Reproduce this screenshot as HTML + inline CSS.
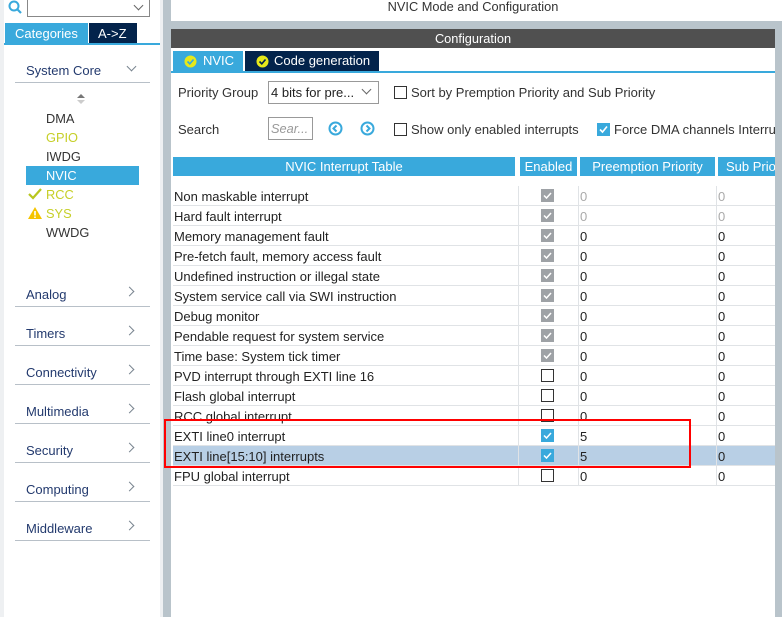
<!DOCTYPE html>
<html><head><meta charset="utf-8"><style>
*{margin:0;padding:0;box-sizing:border-box}
body{width:782px;height:617px;position:relative;overflow:hidden;background:#fff;font-family:"Liberation Sans",sans-serif;font-size:12.8px;color:#222}
.a{position:absolute;white-space:nowrap}
.cat{position:absolute;left:26px;color:#233a6e;font-size:13px}
.ul{position:absolute;left:15px;width:135px;height:1px;background:#b8c0c8}
.chev{position:absolute;left:126px;width:7px;height:7px;border-right:1px solid #7a8590;border-bottom:1px solid #7a8590;transform:rotate(-45deg)}
.row{position:absolute;left:173px;width:602px;height:20px;border-bottom:1px solid #e0e3e6;font-size:13px}
.row span{position:absolute;top:3px;left:1px}
.cb{position:absolute;left:368px;top:3px;width:13px;height:13px}
.g{background:#9ea2a6}
.b{background:#39a9dc}
.e{border:1px solid #333;background:#fff}
.cb svg{position:absolute;left:1px;top:1px}
</style></head><body>
<div class="a" style="left:0;top:0;width:4px;height:617px;background:#eef0f2"></div>
<svg class="a" style="left:8px;top:0" width="16" height="16"><circle cx="6" cy="6" r="4.5" fill="none" stroke="#39a9dc" stroke-width="2"/><line x1="9" y1="9" x2="13" y2="13" stroke="#39a9dc" stroke-width="2.2"/></svg>
<div class="a" style="left:27px;top:-1px;width:123px;height:18px;border:1px solid #888"></div>
<div class="a" style="left:135px;top:2px;width:7px;height:7px;border-right:1px solid #666;border-bottom:1px solid #666;transform:rotate(45deg)"></div>
<div class="a" style="left:5px;top:23px;width:83px;height:21px;background:#39a9dc;color:#fff;font-size:13px;padding:3px 0 0 10px">Categories</div>
<div class="a" style="left:89px;top:23px;width:48px;height:21px;background:#03234b;color:#fff;font-size:13px;padding:3px 0 0 9px">A-&gt;Z</div>
<div class="a" style="left:4px;top:43px;width:159px;height:2px;background:#39a9dc"></div>
<div class="cat" style="top:63px">System Core</div>
<div class="a" style="left:128px;top:63px;width:7px;height:7px;border-right:1px solid #7a8590;border-bottom:1px solid #7a8590;transform:rotate(45deg)"></div>
<div class="ul" style="top:82px"></div>
<div class="a" style="left:77px;top:94px;width:0;height:0;border:4px solid transparent;border-bottom:4px solid #777;border-top:0"></div>
<div class="a" style="left:77px;top:100px;width:0;height:0;border:4px solid transparent;border-top:4px solid #ccc;border-bottom:0"></div>
<div class="a" style="left:46px;top:111px;color:#333">DMA</div>
<div class="a" style="left:46px;top:130px;color:#c6cf28">GPIO</div>
<div class="a" style="left:46px;top:149px;color:#333">IWDG</div>
<div class="a" style="left:26px;top:166px;width:113px;height:19px;background:#39a9dc"></div>
<div class="a" style="left:46px;top:168px;color:#fff">NVIC</div>
<svg class="a" style="left:28px;top:188px" width="14" height="12"><path d="M1 6 L5 10 L13 1" fill="none" stroke="#b8c61e" stroke-width="2.2"/></svg>
<div class="a" style="left:46px;top:187px;color:#c6cf28">RCC</div>
<svg class="a" style="left:27px;top:206px" width="16" height="14"><path d="M8 1 L15 13 L1 13 Z" fill="#f5c400"/><rect x="7.2" y="5" width="1.6" height="4.5" fill="#fff"/><rect x="7.2" y="10.5" width="1.6" height="1.5" fill="#fff"/></svg>
<div class="a" style="left:46px;top:206px;color:#c6cf28">SYS</div>
<div class="a" style="left:46px;top:225px;color:#333">WWDG</div>
<div class="cat" style="top:287px">Analog</div><div class="chev" style="top:288px"></div><div class="ul" style="top:306px"></div>
<div class="cat" style="top:326px">Timers</div><div class="chev" style="top:327px"></div><div class="ul" style="top:345px"></div>
<div class="cat" style="top:365px">Connectivity</div><div class="chev" style="top:366px"></div><div class="ul" style="top:384px"></div>
<div class="cat" style="top:404px">Multimedia</div><div class="chev" style="top:405px"></div><div class="ul" style="top:423px"></div>
<div class="cat" style="top:443px">Security</div><div class="chev" style="top:444px"></div><div class="ul" style="top:462px"></div>
<div class="cat" style="top:482px">Computing</div><div class="chev" style="top:483px"></div><div class="ul" style="top:501px"></div>
<div class="cat" style="top:521px">Middleware</div><div class="chev" style="top:522px"></div><div class="ul" style="top:540px"></div>
<div class="a" style="left:160px;top:0;width:3px;height:617px;background:#eef0f2"></div>
<div class="a" style="left:163px;top:0;width:8px;height:617px;background:#b9c4cb"></div>
<div class="a" style="left:775px;top:21px;width:7px;height:596px;background:#b9c4cb"></div>
<div class="a" style="left:171px;width:604px;text-align:center;top:-1px;color:#333">NVIC Mode and Configuration</div>
<div class="a" style="left:171px;top:21px;width:611px;height:8px;background:#b9c4cb"></div>
<div class="a" style="left:171px;top:29px;width:604px;height:19px;background:#505050;color:#fff;text-align:center;padding-top:2px">Configuration</div>
<div class="a" style="left:173px;top:51px;width:70px;height:21px;background:#39a9dc;color:#fff;padding:2px 0 0 30px;font-size:13px">NVIC</div>
<div class="a" style="left:245px;top:51px;width:134px;height:21px;background:#03234b;color:#fff;padding:2px 0 0 29px;font-size:13px">Code generation</div>
<svg class="a" style="left:184px;top:55px" width="13" height="13"><circle cx="6.5" cy="6.5" r="6" fill="#e6e81a"/><path d="M3.5 6.5 L5.8 8.8 L9.5 4.5" fill="none" stroke="#39a9dc" stroke-width="1.6"/></svg>
<svg class="a" style="left:256px;top:55px" width="13" height="13"><circle cx="6.5" cy="6.5" r="6" fill="#e6e81a"/><path d="M3.5 6.5 L5.8 8.8 L9.5 4.5" fill="none" stroke="#03234b" stroke-width="1.6"/></svg>
<div class="a" style="left:171px;top:71px;width:604px;height:2px;background:#39a9dc"></div>
<div class="a" style="left:178px;top:85px;color:#333;font-size:13px">Priority Group</div>
<div class="a" style="left:268px;top:81px;width:111px;height:23px;border:1px solid #999;padding:3px 0 0 2px;font-size:13px">4 bits for pre...</div>
<div class="a" style="left:363px;top:86px;width:7px;height:7px;border-right:1px solid #666;border-bottom:1px solid #666;transform:rotate(45deg);background:#fff"></div>
<div class="a" style="left:394px;top:86px;width:13px;height:13px;border:1px solid #333"></div>
<div class="a" style="left:411px;top:85px;color:#333;font-size:13px">Sort by Premption Priority and Sub Priority</div>
<div class="a" style="left:178px;top:122px;color:#333;font-size:13px">Search</div>
<div class="a" style="left:268px;top:117px;width:45px;height:23px;border:1px solid #999;padding:3px 0 0 2px;color:#999;font-style:italic">Sear...</div>
<svg class="a" style="left:328px;top:121px" width="15" height="15"><circle cx="7.5" cy="7.5" r="6" fill="none" stroke="#39a9dc" stroke-width="2"/><path d="M8.5 4.5 L5.5 7.5 L8.5 10.5" fill="none" stroke="#39a9dc" stroke-width="2"/></svg>
<svg class="a" style="left:360px;top:121px" width="15" height="15"><circle cx="7.5" cy="7.5" r="6" fill="none" stroke="#39a9dc" stroke-width="2"/><path d="M6.5 4.5 L9.5 7.5 L6.5 10.5" fill="none" stroke="#39a9dc" stroke-width="2"/></svg>
<div class="a" style="left:394px;top:123px;width:13px;height:13px;border:1px solid #333"></div>
<div class="a" style="left:411px;top:122px;color:#333;font-size:13px">Show only enabled interrupts</div>
<div class="a" style="left:597px;top:123px;width:13px;height:13px;background:#39a9dc"><svg width="13" height="13"><path d="M3 6.5 L5.5 9 L10 3.5" fill="none" stroke="#fff" stroke-width="1.6"/></svg></div>
<div class="a" style="left:614px;top:122px;color:#333;width:161px;overflow:hidden;font-size:13px">Force DMA channels Interrupts</div>
<div class="a" style="left:173px;top:157px;width:342px;height:19px;background:#39a9dc;color:#fff;text-align:center;padding-top:2px;font-size:13px">NVIC Interrupt Table</div>
<div class="a" style="left:520px;top:157px;width:57px;height:19px;background:#39a9dc;color:#fff;text-align:center;padding-top:2px;font-size:13px">Enabled</div>
<div class="a" style="left:580px;top:157px;width:135px;height:19px;background:#39a9dc;color:#fff;text-align:center;padding-top:2px;font-size:13px">Preemption Priority</div>
<div class="a" style="left:718px;top:157px;width:57px;height:19px;background:#39a9dc;color:#fff;padding:2px 0 0 8px;overflow:hidden;font-size:13px">Sub Priority</div>
<div class="row" style="top:446px;background:#b8cfe5"></div>
<div class="a" style="left:518px;top:186px;width:1px;height:300px;background:#e0e3e6"></div>
<div class="a" style="left:578px;top:186px;width:1px;height:300px;background:#e0e3e6"></div>
<div class="a" style="left:716px;top:186px;width:1px;height:300px;background:#e0e3e6"></div>
<div class="row" style="top:186px"><span>Non maskable interrupt</span><div class="cb g"><svg width="11" height="11"><path d="M2 5.5 L4.5 8 L9 3" fill="none" stroke="#fff" stroke-width="1.5"/></svg></div><span style="left:407px;color:#aaa">0</span><span style="left:545px;color:#aaa">0</span></div>
<div class="row" style="top:206px"><span>Hard fault interrupt</span><div class="cb g"><svg width="11" height="11"><path d="M2 5.5 L4.5 8 L9 3" fill="none" stroke="#fff" stroke-width="1.5"/></svg></div><span style="left:407px;color:#aaa">0</span><span style="left:545px;color:#aaa">0</span></div>
<div class="row" style="top:226px"><span>Memory management fault</span><div class="cb g"><svg width="11" height="11"><path d="M2 5.5 L4.5 8 L9 3" fill="none" stroke="#fff" stroke-width="1.5"/></svg></div><span style="left:407px">0</span><span style="left:545px">0</span></div>
<div class="row" style="top:246px"><span>Pre-fetch fault, memory access fault</span><div class="cb g"><svg width="11" height="11"><path d="M2 5.5 L4.5 8 L9 3" fill="none" stroke="#fff" stroke-width="1.5"/></svg></div><span style="left:407px">0</span><span style="left:545px">0</span></div>
<div class="row" style="top:266px"><span>Undefined instruction or illegal state</span><div class="cb g"><svg width="11" height="11"><path d="M2 5.5 L4.5 8 L9 3" fill="none" stroke="#fff" stroke-width="1.5"/></svg></div><span style="left:407px">0</span><span style="left:545px">0</span></div>
<div class="row" style="top:286px"><span>System service call via SWI instruction</span><div class="cb g"><svg width="11" height="11"><path d="M2 5.5 L4.5 8 L9 3" fill="none" stroke="#fff" stroke-width="1.5"/></svg></div><span style="left:407px">0</span><span style="left:545px">0</span></div>
<div class="row" style="top:306px"><span>Debug monitor</span><div class="cb g"><svg width="11" height="11"><path d="M2 5.5 L4.5 8 L9 3" fill="none" stroke="#fff" stroke-width="1.5"/></svg></div><span style="left:407px">0</span><span style="left:545px">0</span></div>
<div class="row" style="top:326px"><span>Pendable request for system service</span><div class="cb g"><svg width="11" height="11"><path d="M2 5.5 L4.5 8 L9 3" fill="none" stroke="#fff" stroke-width="1.5"/></svg></div><span style="left:407px">0</span><span style="left:545px">0</span></div>
<div class="row" style="top:346px"><span>Time base: System tick timer</span><div class="cb g"><svg width="11" height="11"><path d="M2 5.5 L4.5 8 L9 3" fill="none" stroke="#fff" stroke-width="1.5"/></svg></div><span style="left:407px">0</span><span style="left:545px">0</span></div>
<div class="row" style="top:366px"><span>PVD interrupt through EXTI line 16</span><div class="cb e"></div><span style="left:407px">0</span><span style="left:545px">0</span></div>
<div class="row" style="top:386px"><span>Flash global interrupt</span><div class="cb e"></div><span style="left:407px">0</span><span style="left:545px">0</span></div>
<div class="row" style="top:406px"><span>RCC global interrupt</span><div class="cb e"></div><span style="left:407px">0</span><span style="left:545px">0</span></div>
<div class="row" style="top:426px"><span>EXTI line0 interrupt</span><div class="cb b"><svg width="11" height="11"><path d="M2 5.5 L4.5 8 L9 3" fill="none" stroke="#fff" stroke-width="1.5"/></svg></div><span style="left:407px">5</span><span style="left:545px">0</span></div>
<div class="row" style="top:446px;background:transparent"><span>EXTI line[15:10] interrupts</span><div class="cb b"><svg width="11" height="11"><path d="M2 5.5 L4.5 8 L9 3" fill="none" stroke="#fff" stroke-width="1.5"/></svg></div><span style="left:407px">5</span><span style="left:545px">0</span></div>
<div class="row" style="top:466px"><span>FPU global interrupt</span><div class="cb e"></div><span style="left:407px">0</span><span style="left:545px">0</span></div>
<div class="a" style="left:164px;top:419px;width:527px;height:49px;border:2px solid #f00"></div>
</body></html>
